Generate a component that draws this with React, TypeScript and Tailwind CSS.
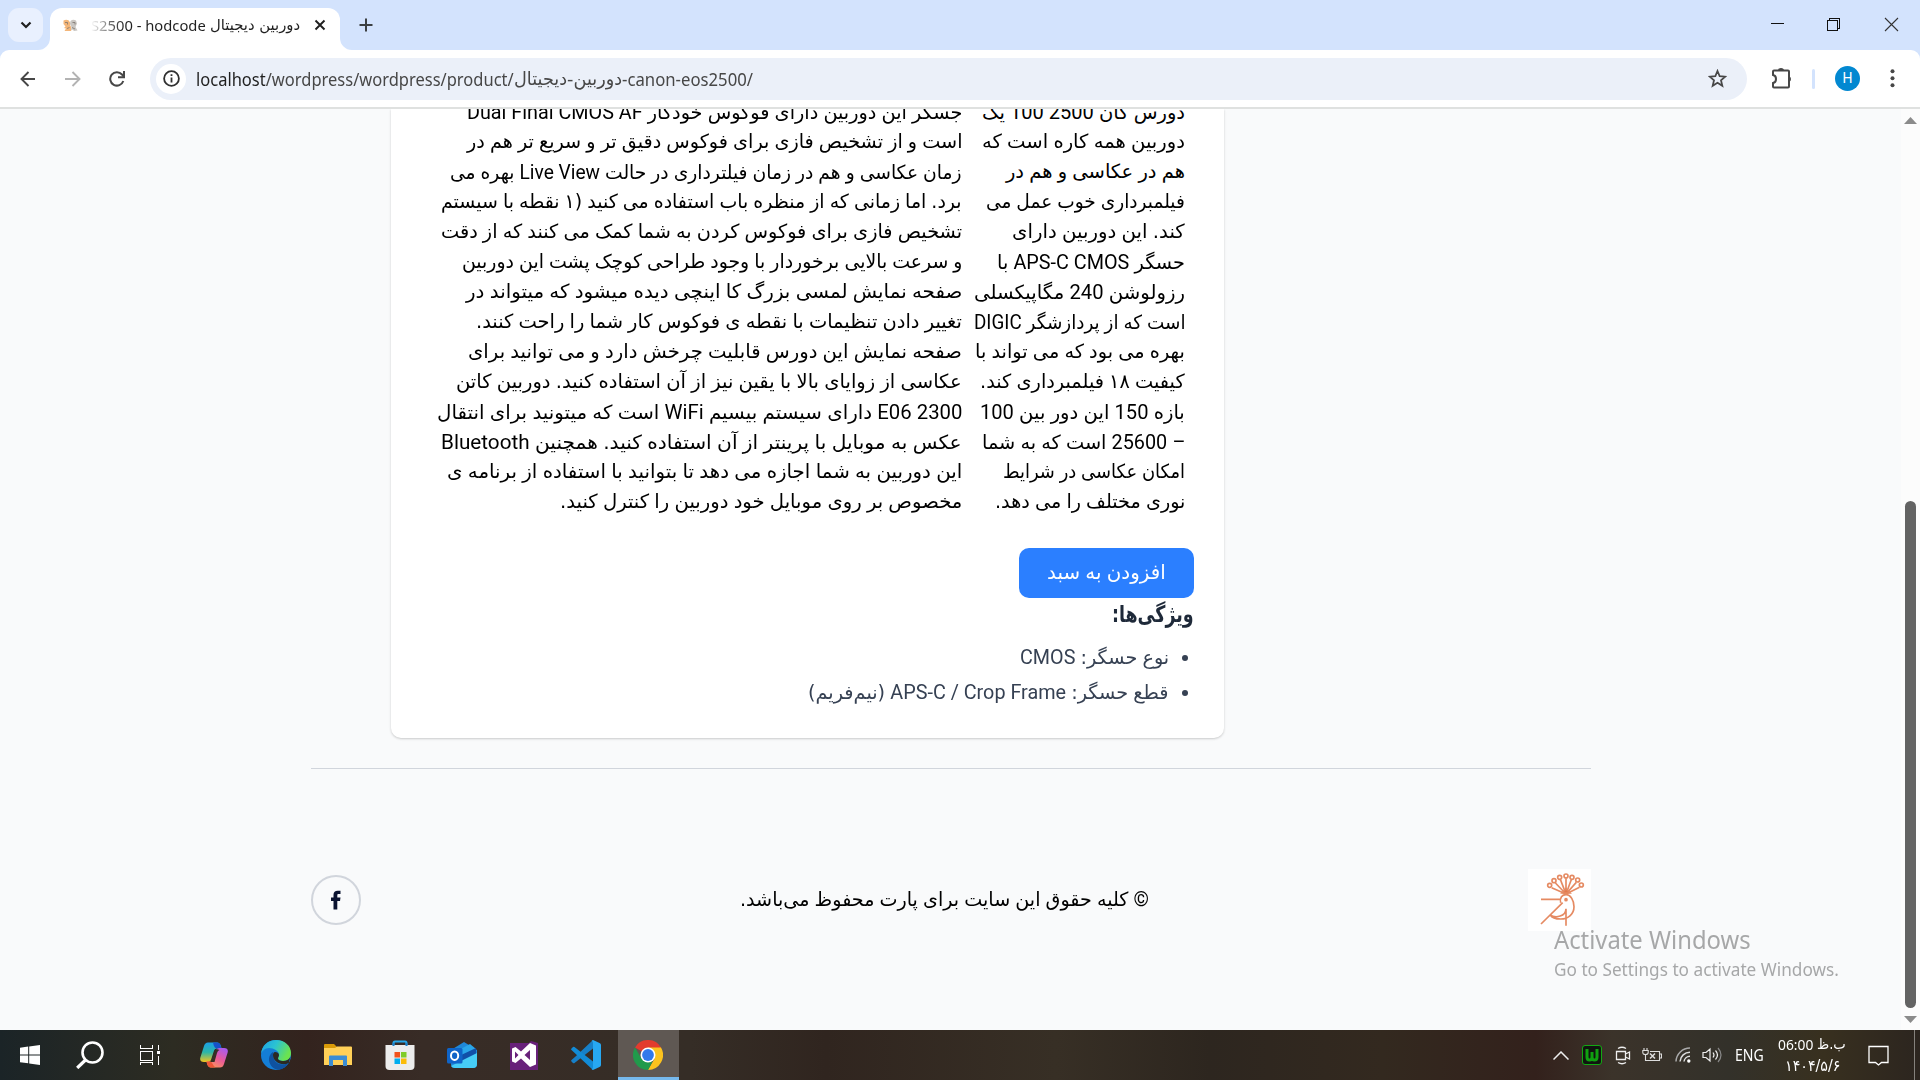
import { useLayoutEffect, useRef, useState, type ReactNode } from "react";

/** Single line of text, condensed or stretched to an exact width. */
function Fit({ w, children, rtl = false, className = "" }: { w: number; children: ReactNode; rtl?: boolean; className?: string }) {
  const ref = useRef<HTMLSpanElement>(null);
  const [scale, setScale] = useState(1);
  useLayoutEffect(() => {
    if (ref.current && ref.current.offsetWidth > 0) setScale(w / ref.current.offsetWidth);
  }, [w]);
  return (
    <span className={`block ${className}`} style={{ width: w }} dir={rtl ? "rtl" : "ltr"}>
      <span
        ref={ref}
        className={`inline-block whitespace-nowrap ${rtl ? "origin-right" : "origin-left"}`}
        style={{ transform: `scaleX(${scale})` }}
      >
        {children}
      </span>
    </span>
  );
}

/** Persian text whose Latin runs are set in Roboto. */
function Mixed({ text }: { text: string }) {
  const parts = text.split(/([A-Za-z0-9](?:[A-Za-z0-9 /-]*[A-Za-z0-9])?|–)/);
  return (
    <>
      {parts.map((p, i) =>
        i % 2 === 1 ? (
          <span key={i} className="font-[Roboto] text-[20px] [word-spacing:0]">
            {p}
          </span>
        ) : (
          p
        )
      )}
    </>
  );
}

const FA = "font-['DejaVu_Sans',sans-serif]";

const columnOne: [string, number][] = [
  ["دورس کان 2500 100 یک", 203],
  ["دوربین همه کاره است که", 203],
  ["هم در عکاسی و هم در", 179],
  ["فیلمبرداری خوب عمل می", 199],
  ["کند. این دوربین دارای", 173],
  ["حسگر APS-C CMOS با", 188],
  ["رزولوشن 240 مگاپیکسلی", 211],
  ["است که از پردازشگر DIGIC", 212],
  ["بهره می بود که می تواند با", 210],
  ["کیفیت ۱۸ فیلمبرداری کند.", 205],
  ["بازه 150 این دور بین 100", 205],
  ["– 25600 است که به شما", 203],
  ["امکان عکاسی در شرایط", 182],
  ["نوری مختلف را می دهد.", 190],
];

const columnTwo: [string, number][] = [
  ["جسگر این دوربین دارای فوکوس خودکار Dual Final CMOS AF", 495],
  ["است و از تشخیص فازی برای فوکوس دقیق تر و سریع تر هم در", 496],
  ["زمان عکاسی و هم در زمان فیلترداری در حالت Live View بهره می", 512],
  ["برد. اما زمانی که از منظره باب استفاده می کنید (۱ نقطه با سیستم", 521],
  ["تشخیص فازی برای فوکوس کردن به شما کمک می کنند که از دقت", 521],
  ["و سرعت بالایی برخوردار با وجود طراحی کوچک پشت این دوربین", 501],
  ["صفحه نمایش لمسی بزرگ کا اینچی دیده میشود که میتواند در", 496],
  ["تغییر دادن تنظیمات با نقطه ی فوکوس کار شما را راحت کنند.", 486],
  ["صفحه نمایش این دورس قابلیت چرخش دارد و می توانید برای", 494],
  ["عکاسی از زوایای بالا با یقین نیز از آن استفاده کنید. دوربین کاتن", 506],
  ["E06 2300 دارای سیستم بیسیم WiFi است که میتونید برای انتقال", 525],
  ["عکس به موبایل با پرینتر از آن استفاده کنید. همچنین Bluetooth", 521],
  ["این دوربین به شما اجازه می دهد تا بتوانید با استفاده از برنامه ی", 515],
  ["مخصوص بر روی موبایل خود دوربین را کنترل کنید.", 402],
];

function Column({ lines, className }: { lines: [string, number][]; className: string }) {
  return (
    <div className={className}>
      {lines.map(([t, w]) => (
        <Fit key={t} w={w} rtl className="h-[30px] leading-[30px]">
          <Mixed text={t} />
        </Fit>
      ))}
    </div>
  );
}

function TabStrip() {
  return (
    <div className="flex h-[50px] shrink-0 bg-[#d3e3fd]">
      <div className="ml-2 mt-2 flex h-[34px] w-[35px] items-center justify-center rounded-[11px] bg-[#e9f0fe]">
        <svg width="12" height="8" viewBox="0 0 12 8" fill="none" stroke="#1f1f1f" strokeWidth="2.2">
          <path d="M1.5 1.5 6 6l4.500-4.500" />
        </svg>
      </div>
      <svg className="mt-auto ml-[-5px]" width="12" height="12" viewBox="0 0 12 12">
        <path d="M12 0v12H0A12 12 0 0 0 12 0" fill="#fff" />
      </svg>
      <div className="mt-2 flex h-[42px] w-[290px] items-center rounded-t-[12px] bg-white pl-[13px]">
        <svg width="15" height="13" viewBox="0 0 15 13" className="-mt-2">
          <path d="M.5 1.500Q3 0 5.500 1.200L7.500 4 7 6 8.200 8v4L1.500 12 3 9.500 1 9 2.500 7.500.500 5Z" fill="#f3b67a" />
          <path d="M7.500 2Q10 0 13 1.500l1 3-1.500 3.500 2 3.500-3.500.500-1.500-1.500-1.500.500L8.500 8 7 5Z" fill="#c9c6c2" />
          <path d="M2 3.500h2.500v2M9.500 3.500h2.500v2M4 9.500l2.500-1M9 8.500l3 1.500" stroke="#7c756e" strokeWidth=".8" fill="none" />
        </svg>
        <div className="-mt-2 ml-[13px] flex items-center text-[15px] text-[#1f1f1f]">
          <Fit w={115} className="font-['Noto_Sans',sans-serif] h-6 leading-6">
            <span className="bg-linear-to-r from-white from-[0%] via-[#555] via-[20%] to-[#1f1f1f] to-[30%] bg-clip-text text-transparent">S2500 - hodcode</span>
          </Fit>
          <Fit w={90} rtl className={`${FA} ml-1 h-6 text-[15px] leading-6`}>
            دوربین دیجیتال
          </Fit>
        </div>
        <svg className="-mt-2 ml-[14px]" width="12" height="12" viewBox="0 0 12 12" stroke="#1f1f1f" strokeWidth="1.900">
          <path d="m1.500 1.500 9 9m0-9-9 9" />
        </svg>
      </div>
      <svg className="mt-auto" width="12" height="12" viewBox="0 0 12 12">
        <path d="M0 0v12h12A12 12 0 0 1 0 0" fill="#fff" />
      </svg>
      <svg className="ml-[7px] mt-[18px]" width="14" height="14" viewBox="0 0 14 14" stroke="#3c4043" strokeWidth="2">
        <path d="M7 .5v13M.5 7h13" />
      </svg>
      <div className="ml-auto flex pr-[21px] pt-[17px]">
        <svg className="mr-[43px]" width="13" height="14" viewBox="0 0 13 14" shapeRendering="crispEdges">
          <path d="M0 6.500h13" stroke="#111" />
        </svg>
        <svg className="mr-[44px]" width="13" height="15" viewBox="0 0 13 15" fill="none" stroke="#111" shapeRendering="crispEdges">
          <path d="M.5 3.500h10v10H.5zM2.500 3.500v-2h10v10h-2" />
        </svg>
        <svg width="15" height="15" viewBox="0 0 15 15" stroke="#333" strokeWidth="1.100">
          <path d="m1 1 13 13m0-13L1 14" />
        </svg>
      </div>
    </div>
  );
}

function Toolbar() {
  return (
    <div className="shrink-0 bg-[#d3e3fd]">
      <div className="flex h-[57px] items-center rounded-t-[9px] bg-white">
        <svg className="ml-5" width="16" height="16" viewBox="0 0 16 16" fill="none" stroke="#474747" strokeWidth="1.900">
          <path d="M15 8H2m6.500-7L1.500 8l7 7" />
        </svg>
        <svg className="ml-[29px]" width="16" height="16" viewBox="0 0 16 16" fill="none" stroke="#b3b3b3" strokeWidth="1.900">
          <path d="M0 8h14M7.500 1l7 7-7 7" />
        </svg>
        <svg className="ml-[28px] mr-px" width="16" height="16" viewBox="0 0 16 16" fill="none" stroke="#474747" strokeWidth="2">
          <path d="M14.300 10A6.700 6.700 0 1 1 13 3.500l1.800 2" />
          <path d="M15 0v6.300H9" />
        </svg>
        <div className="ml-6 flex h-[42px] w-[1597px] items-center rounded-full bg-[#ebf0f9] pl-[6px]">
          <div className="flex h-[30px] w-[30px] items-center justify-center rounded-full bg-white">
            <svg width="17" height="17" viewBox="0 0 17 17" fill="none" stroke="#303030" strokeWidth="1.800">
              <circle cx="8.500" cy="8.500" r="7.400" />
              <path d="M8.500 7.500v5M8.500 4.200v1.900" />
            </svg>
          </div>
          <div className="ml-[10px] flex text-[18px] leading-[30px] text-[#474747] font-['Noto_Sans',sans-serif]">
            <Fit w={318}>
              <span className="text-[#1f1f1f]">localhost</span>/wordpress/wordpress/product/
            </Fit>
            <Fit w={108} rtl className={`${FA} text-[18px]`}>
              دوربین-دیجیتال
            </Fit>
            <Fit w={131}>-canon-eos2500/</Fit>
          </div>
          <svg className="ml-auto mr-5" width="19" height="19" viewBox="0 0 24 24" fill="none" stroke="#474747" strokeWidth="2.200">
            <path d="m12 2.500 2.700 6.600 7.100.6-5.400 4.600 1.700 7L12 17.500l-6.100 3.800 1.700-7-5.400-4.600 7.100-.6Z" />
          </svg>
        </div>
        <svg className="ml-6" width="21" height="21" viewBox="0 0 21 21" fill="none" stroke="#474747" strokeWidth="2">
          <path d="M2 3.500Q2 2.500 3 2.500h14q1 0 1 1v15q0 1-1 1H3q-1 0-1-1V15q3-.5 3-4t-3-4Z" />
          <path d="M7 2.500a3 2.500 0 0 1 6 0ZM18 8.500a2 2.500 0 0 1 0 5Z" fill="#474747" strokeWidth="0" />
        </svg>
        <div className="ml-5 h-5 w-[3px] rounded bg-[#d3e3fd]" />
        <div className="ml-5 flex h-[25px] w-[25px] items-center justify-center rounded-full bg-[#0288d1] font-[Roboto] text-[14px] text-white">H</div>
        <svg className="ml-[30px]" width="5" height="19" viewBox="0 0 5 19" fill="#474747">
          <circle cx="2.500" cy="2.300" r="2" />
          <circle cx="2.500" cy="9.300" r="2" />
          <circle cx="2.500" cy="16.300" r="2" />
        </svg>
      </div>
      <div className="h-0.5 bg-[#dfe1e0]" />
    </div>
  );
}

function BirdLogo() {
  const crest = [
    [65, 49],
    [78, 35],
    [95, 25],
    [114, 21],
    [132, 25],
    [149, 33],
    [160, 48],
  ];
  return (
    <svg width="63" height="62" viewBox="0 0 189 186" className="bg-white" fill="none" stroke="#e58a62" strokeWidth="5">
      {crest.map(([x, y]) => (
        <g key={x}>
          <path d={`M114 75 ${x + (114 - x) * 0.12} ${y + 7}`} />
          <circle cx={x} cy={y} r="6" />
        </g>
      ))}
      <path d="M102 72h24l-12-13Z" fill="#e2794c" />
      <path d="M39 91h58M98 101C94 86 103 77 114 77c14 0 24 18 24 36 0 22-17 37-40 37-16 0-27-5-31-12M104 101l-65 64M66 138c18 11 47 4 48-19v51" />
      <circle cx="114" cy="92" r="3" fill="#e2794c" />
    </svg>
  );
}

function Page() {
  return (
    <div className="flex min-h-0 flex-1 bg-[#f9fafb]">
      <main className={`flex min-w-0 flex-1 flex-col overflow-hidden text-black ${FA}`} dir="rtl">
        <div className="mr-[677px] h-[629px] w-[833px] shrink-0 rounded-b-[10px] bg-white pr-[30px] shadow-[0_1px_3px_rgba(0,0,0,0.1),0_1px_2px_rgba(0,0,0,0.1)]">
          <div className="h-[439px] overflow-hidden">
            <div className="-mt-[12px] flex text-[19.500px] [word-spacing:-1px]">
              <Column lines={columnOne} className="mr-[9px] w-[223px]" />
              <Column lines={columnTwo} className="w-[540px]" />
            </div>
          </div>
          <div className="flex h-[50px] w-[175px] items-center justify-center rounded-[10px] bg-[#2b7fff] pb-0.5 text-[20px] text-white [word-spacing:-1px]">
            <Fit w={119} rtl>
              افزودن به سبد
            </Fit>
          </div>
          <h3 className="h-[34px] text-[23px] font-bold leading-[33px] text-[#1e2939]">
            <Fit w={82} rtl>
              ویژگی‌ها:
            </Fit>
          </h3>
          <ul className="pt-2 text-[19.500px] leading-[35px] text-[#364153] [word-spacing:-1px]">
            <li className="flex h-[35px] items-center">
              <span className="ml-[13px] mr-[6px] h-1.5 w-1.5 rounded-full bg-[#364153]" />
              <Fit w={149} rtl>
                <Mixed text="نوع حسگر: CMOS" />
              </Fit>
            </li>
            <li className="flex h-[35px] items-center">
              <span className="ml-[13px] mr-[6px] h-1.5 w-1.5 rounded-full bg-[#364153]" />
              <Fit w={361} rtl>
                <Mixed text="قطع حسگر: APS-C / Crop Frame (نیم‌فریم)" />
              </Fit>
            </li>
          </ul>
        </div>
        <footer className="mr-[310px] mt-[30px] flex w-[1280px] items-start justify-between border-t border-[#d1d5dc]">
          <div className="mt-[100px]">
            <BirdLogo />
          </div>
          <Fit w={409} rtl className="mt-[115px] h-[30px] text-[19.500px] leading-[30px] [word-spacing:-1px]">
            <span className="font-[Roboto] text-[20px]">©</span> کلیه حقوق این سایت برای پارت محفوظ می‌باشد.
          </Fit>
          <div className="mt-[106px] flex h-[50px] w-[50px] items-center justify-center rounded-full border-2 border-[#d1d5dc]">
            <svg width="10" height="20" viewBox="0 0 10 20" fill="#0b1330">
              <path d="M2.500 19.500V11H0V7.500h2.500V4.800C2.500 1.900 4 .7 6.700.7H9.500V4H7.700C6.600 4 6.300 4.500 6.300 5.400v2.100h3.200L9 11H6.300V19.500Z" />
            </svg>
          </div>
        </footer>
      </main>
      <div className="flex w-[19px] flex-col items-center bg-[#fcfcfc]">
        <svg className="mt-2" width="13" height="7" viewBox="0 0 13 7" fill="#8b8b8b">
          <path d="M0 7 6.500 0 13 7" />
        </svg>
        <div className="mt-[377px] h-[507px] w-[11px] rounded-full bg-[#636363]" />
        <svg className="mt-2" width="13" height="7" viewBox="0 0 13 7" fill="#8b8b8b">
          <path d="m0 0 6.500 7L13 0" />
        </svg>
      </div>
    </div>
  );
}

const apps: { id: string; cell: string; icon: ReactNode }[] = [
  {
    id: "start",
    cell: "w-[60px]",
    icon: (
      <svg width="20" height="20" viewBox="0 0 20 20" fill="#fff">
        <path d="M0 2.800 8.200 1.600v7.800H0ZM9.200 1.500 20 0v9.400H9.200ZM0 10.400h8.200v7.900L0 17.200ZM9.200 10.400H20V20L9.200 18.500Z" />
      </svg>
    ),
  },
  {
    id: "search",
    cell: "w-[60px]",
    icon: (
      <svg width="28" height="28" viewBox="0 0 28 28" fill="none" stroke="#fff" strokeWidth="2.600">
        <circle cx="16.500" cy="11.500" r="10" />
        <path d="M9.500 19 1.200 27" strokeWidth="3.200" />
      </svg>
    ),
  },
  {
    id: "tasks",
    cell: "w-[60px] mr-[3px]",
    icon: (
      <svg width="20" height="20" viewBox="0 0 20 20" fill="none" stroke="#fff" shapeRendering="crispEdges">
        <path d="M.5 0v3.500h12V0M.5 6.500h12v9H.5zM.5 20v-2.500h12V20M18.500 0v5M18.500 11v9" />
        <path d="M17 6h3v3h-3z" fill="#fff" stroke="none" />
      </svg>
    ),
  },
  {
    id: "copilot",
    cell: "w-[62px]",
    icon: (
      <svg width="28" height="26" viewBox="0 0 28 26">
        <defs>
          <linearGradient id="cpa" x1="0" y1="0" x2="0" y2="1">
            <stop offset="0" stopColor="#1ba0e8" />
            <stop offset=".5" stopColor="#2cb6a8" />
            <stop offset="1" stopColor="#f3c51c" />
          </linearGradient>
          <linearGradient id="cpb" x1=".8" y1="0" x2=".2" y2="1">
            <stop offset="0" stopColor="#a75bf0" />
            <stop offset=".5" stopColor="#e85a9a" />
            <stop offset="1" stopColor="#ff9a55" />
          </linearGradient>
        </defs>
        <path d="M8 .5h9q3 0 4 4l.5 2h-5q-2 0-2.600 2.500L11 18q-.7 2-3 2H4q-5 0-3.500-5L4 4Q5 .5 8 .5" fill="url(#cpa)" />
        <path d="M13 .5h4q3 0 4 4l.5 2h-5Q14 6 13 .5" fill="#1751ca" />
        <path d="M20 25.500h-9q-3 0-4-4l-.5-2h3q2.500 0 3.200-2.500L16 8.500q.6-2.500 3-2.500h5q5 0 3.500 5L24 22q-1 3.500-4 3.500" fill="url(#cpb)" />
        <path d="M14.500 9 11.500 18q-.8 2-2.500 2h5.500L17 11q.7-2.500 2.500-3Q16 6 14.500 9" fill="#352f24" />
        <path d="M6.500 19.500h3q2 0 3 2.200t3 3.800H11q-3 0-4-4Z" fill="#ee5638" />
      </svg>
    ),
  },
  {
    id: "edge",
    cell: "w-[62px]",
    icon: (
      <svg width="30" height="30" viewBox="0 0 30 30">
        <defs>
          <linearGradient id="eda" x1="0" y1="0" x2="1" y2=".4">
            <stop offset="0" stopColor="#1c9ee6" />
            <stop offset=".5" stopColor="#2bc3d2" />
            <stop offset="1" stopColor="#6be34f" />
          </linearGradient>
        </defs>
        <circle cx="15" cy="15" r="15" fill="#147ed6" />
        <path d="M0 14C1 5 7 0 15 0c9 0 15 6 15 13 0 5-3 8-8 8-3 0-5-1-5-2.500 0-1 1-1.500 1-4C18 11 13 8 8 8c-4 0-7 3-8 6" fill="url(#eda)" />
        <path d="M12 12c-3 2-5 6-3.500 10.500S14 30 18 29.700c4-.7 7.500-3 9.800-6.700-7 3.500-15 .5-15.500-6.500-.1-2 .2-3.500-.3-4.500" fill="#0f52a0" />
        <path d="M14 12c2 0 4 1 4 3 0 1.500-1 2-1 3.500s2 2.500 5 2.500c3.500 0 6-1.500 7.300-4l-1.500 6c-7 3.500-15.800-1-15.800-8 0-1.500.8-3 2-3" fill="#2c2a24" />
      </svg>
    ),
  },
  {
    id: "explorer",
    cell: "w-[62px]",
    icon: (
      <svg width="28" height="24" viewBox="0 0 28 24">
        <path d="M0 2Q0 1 1 1h9l3 3v6H0Z" fill="#d99a08" />
        <path d="M0 5h11l2-1.500h14q1 0 1 1V22H0Z" fill="#ffd058" />
        <path d="M5 13.500q0-1 1-1h16q1 0 1 1V23h-4v-6H9v6H5Z" fill="#3b8dd4" />
      </svg>
    ),
  },
  {
    id: "store",
    cell: "w-[62px]",
    icon: (
      <svg width="30" height="30" viewBox="0 0 30 30">
        <path d="M8.500 8V3q0-1.500 1.500-1.500h10q1.500 0 1.500 1.500v5" fill="none" stroke="#26a7ea" strokeWidth="2" />
        <path d="M.5 5h29v21q0 4-4 4h-21q-4 0-4-4Z" fill="#ececec" />
        <path d="M8.500 3v3M21.500 3v3" stroke="#1b7fc9" strokeWidth="2" />
        <path d="M9.500 12H15v5.500H9.500z" fill="#f1511b" />
        <path d="M16 12h5.500v5.500H16z" fill="#80cc28" />
        <path d="M9.500 18.500H15V24H9.500z" fill="#00adef" />
        <path d="M16 18.500h5.500V24H16z" fill="#fbbc09" />
      </svg>
    ),
  },
  {
    id: "outlook",
    cell: "w-[62px]",
    icon: (
      <svg width="30" height="26" viewBox="0 0 30 26">
        <path d="M4 8 17 0l13 8v14q0 4-4 4H8q-4 0-4-4Z" fill="#1f88d8" />
        <path d="M10 9 23 2l6 5-14 10Z" fill="#2aa6ea" />
        <path d="M12 14 29 6v6L13 22Z" fill="#1150a8" />
        <path d="M30 11v11q0 4-4 4H8q-3 0-4-2Z" fill="#46cdf6" />
        <rect y="6" width="15.500" height="15.500" rx="1.500" fill="#0f64c8" />
        <ellipse cx="7.600" cy="13.700" rx="3.600" ry="4.200" fill="none" stroke="#fff" strokeWidth="2" />
      </svg>
    ),
  },
  {
    id: "visual-studio",
    cell: "w-[62px]",
    icon: (
      <svg width="28" height="29" viewBox="0 0 28 29">
        <path d="M0 2h19l2-2 7 2v27H0Z" fill="#68217a" />
        <path d="m20 2 6 2.500v19L20 26l-9-8.500-5.500 4.500L2 20.500v-13L5.500 6 11 10.500ZM20 9l-5.500 5 5.500 5ZM5 10.500v7l3.500-3.500Z" fill="#fff" fillRule="evenodd" />
      </svg>
    ),
  },
  {
    id: "vs-code",
    cell: "w-[62px]",
    icon: (
      <svg width="30" height="30" viewBox="0 0 30 30">
        <path d="M22 0 4.500 16.500.500 20q-.8.800 0 1.500l1.500 1.500q.8.500 1.500 0L22 8.500Z" fill="#1780c8" />
        <path d="M22 30 .500 10q-.8-.8 0-1.500L2 7q.8-.5 1.500 0L22 21.500Z" fill="#128bd6" />
        <path d="m22 0 6.500 3q1.500.7 1.500 2v20q0 1.300-1.500 2L22 30l-1.500-1q1.500.3 1.500-2V3q0-2-1.500-2Z" fill="#27a8f2" />
      </svg>
    ),
  },
  {
    id: "chrome",
    cell: "ml-px w-[61px] border-b-3 border-[#76b9ed] bg-[#5f5853] pr-px pt-[3px]",
    icon: (
      <svg width="30" height="30" viewBox="0 0 30 30">
        <path d="M15 15 2 7.500A15 15 0 0 1 28 7.500L28 8Z" fill="#e33b2e" />
        <path d="M15 7.500h13A15 15 0 0 1 15 30l6.500-11.200Z" fill="#fcc31e" />
        <path d="M2 7.500 8.500 18.700 15 22.500l4.500-1.200L15 30A15 15 0 0 1 2 7.500" fill="#219a4b" />
        <circle cx="15" cy="15" r="7.500" fill="#fff" />
        <circle cx="15" cy="15" r="5.900" fill="#3279ea" />
      </svg>
    ),
  },
];

function Taskbar() {
  return (
    <div className="flex h-[50px] w-full shrink-0 bg-[linear-gradient(90deg,#1b2427_0%,#2d2c22_9%,#33231e_16%,#382c26_22%,#352d26_36%,#30251f_43%,#372f25_55%,#2d261f_63%,#33291f_72%,#33211c_80%,#3b332a_84%,#33312a_90%,#38301f_95%,#2c251f_100%)] text-white">
      {apps.map((a) => (
        <div key={a.id} className={`flex h-[50px] items-center justify-center ${a.cell}`}>
          {a.icon}
        </div>
      ))}
      <div className="ml-auto flex items-center">
        <svg className="mr-[13px]" width="16" height="9" viewBox="0 0 16 9" fill="none" stroke="#eee" strokeWidth="1.500">
          <path d="m.5 8.500 7.500-7.500 7.500 7.500" />
        </svg>
        <div className="mr-[13px] flex h-5 w-5 items-center justify-center rounded-[3px] border border-[#12a812] bg-[#101510]">
          <svg width="14" height="13" viewBox="0 0 14 13" fill="none" stroke="#10a010" strokeWidth="3">
            <path d="M2 0v8q0 3 2.500 3T7 8V3v5q0 3 2.500 3T12 8V0" />
          </svg>
        </div>
        <svg className="mr-[11px]" width="16" height="19" viewBox="0 0 16 19" fill="none" stroke="#eee" strokeWidth="1.300">
          <path d="M1.500 5.500h9v8h-9zM10.500 8l4-2v7l-4-2M3 2.500Q7 0 11 2.500M3 16.500Q7 19 11 16.500" />
        </svg>
        <svg className="mr-[13px]" width="20" height="14" viewBox="0 0 20 14" fill="none" stroke="#ddd" strokeWidth="1.100">
          <path d="M2 0v2.500M5 0v2.500M.8 2.500h5.400v2q0 2-2.700 2t-2.700-2ZM3.500 6.500V12.500H17.500V3.500H8M18 6h1.500v4H18" />
          <path d="m8 5.500 5 5m0-5-5 5" strokeWidth="1.500" />
        </svg>
        <svg className="mr-2.5" width="17" height="16" viewBox="0 0 17 16" fill="none" stroke="#aaa" strokeWidth="1.500">
          <path d="M1 14.500A14 14 0 0 1 15 1" />
          <path d="M5 14.500A10 10 0 0 1 15 5.200M9 14.500a6 6 0 0 1 6-5.200" stroke="#ddd" />
          <circle cx="13.800" cy="14" r="1.700" fill="#fff" stroke="none" />
        </svg>
        <svg className="mr-[12px]" width="21" height="18" viewBox="0 0 21 18" fill="none" stroke="#eee" strokeWidth="1.200">
          <path d="M1 6.500h3L8 3v12l-4-3.500H1ZM11 6.500q2 2.500 0 5M13.500 4.500q4 4.500 0 9" />
          <path d="M16 2q6 7 0 14" stroke="#888" />
        </svg>
        <Fit w={29} className="font-['Noto_Sans',sans-serif] text-[16px] leading-5">ENG</Fit>
        <div className="ml-[13px] flex w-[70px] flex-col items-center">
          <div className="flex h-[22px] items-center">
            <Fit w={35} className="font-['Noto_Sans',sans-serif] text-[15px]">06:00</Fit>
            <Fit w={29} rtl className={`${FA} ml-1 text-[15px]`}>ب.ظ</Fit>
          </div>
          <Fit w={55} className={`${FA} h-[22px] text-[15px] leading-[22px]`}>۱۴۰۴/۵/۶</Fit>
        </div>
        <svg className="ml-[21px] mr-[25px]" width="21" height="21" viewBox="0 0 21 21" fill="none" stroke="#fff" strokeWidth="1.300">
          <path d="M1 1.500h19v16h-6.500L10.500 20l-3-2.500H1Z" />
        </svg>
        <div className="mr-[5px] h-[50px] w-px bg-[#85817c]" />
      </div>
    </div>
  );
}

export default function App() {
  return (
    <div className="relative flex h-[1080px] w-[1920px] flex-col overflow-hidden" dir="ltr">
      <TabStrip />
      <Toolbar />
      <Page />
      <Taskbar />
      <div className="absolute left-[1554px] top-[923px] font-['Noto_Sans',sans-serif] text-[#a6a7a8]">
        <Fit w={197} className="h-8 text-[25px] leading-8">
          Activate Windows
        </Fit>
        <Fit w={285} className="mt-0.5 h-6 text-[17.500px] leading-6">
          Go to Settings to activate Windows.
        </Fit>
      </div>
    </div>
  );
}
